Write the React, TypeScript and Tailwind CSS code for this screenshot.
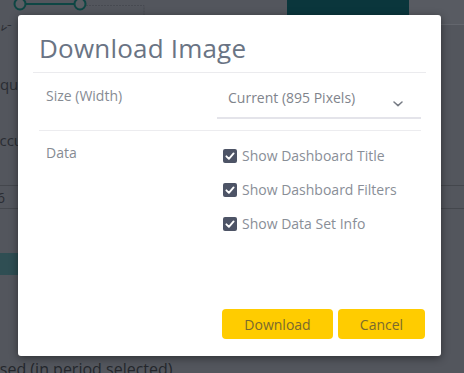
import { useState } from 'react';

const options = ['Show Dashboard Title', 'Show Dashboard Filters', 'Show Data Set Info'];

function Checkbox({ checked }: { checked: boolean }) {
    return (
        <span className="flex h-[14px] w-[14px] items-center justify-center rounded-[2px] bg-[#4d5466]">
            {checked && (
                <svg width="14" height="14" viewBox="0 0 14 14" fill="none">
                    <path d="M3.4 7.3 L5.9 9.8 L10.6 4.4" stroke="#ffffff" strokeWidth="1.9" strokeLinecap="round" strokeLinejoin="round" />
                </svg>
            )}
        </span>
    );
}

function Backdrop() {
    return (
        <div className="flex flex-col text-[#2a2d33]">
            {/* top strip */}
            <div className="flex h-[25px]">
                <svg width="287" height="25" viewBox="0 0 287 25">
                    <path d="M80 5.5 H144 V25" stroke="#474a51" strokeWidth="1" fill="none" strokeDasharray="2 1" />
                    <line x1="20" y1="4" x2="80" y2="4" stroke="#0e4644" strokeWidth="2" />
                    <circle cx="20" cy="4" r="5.5" fill="#5a5d63" stroke="#0e4644" strokeWidth="2" />
                    <circle cx="80" cy="4" r="5.5" fill="#5a5d63" stroke="#0e4644" strokeWidth="2" />
                </svg>
                <div className="h-[15px] w-[122px] bg-[#0a363c]" />
                <div className="h-[25px] flex-1 border-b border-[#63666d] bg-[#585b62]" />
            </div>

            {/* left labels, mostly hidden behind the dialog */}
            <div className="flex h-[160px] w-[18px] flex-col overflow-hidden text-[15px] leading-[20px]">
                <span className="ml-[-14px] mt-[2px] w-[40px] origin-left rotate-[-32deg] text-[13px] leading-[16px]">2020</span>
                <span className="ml-[-24px] mt-[31px] whitespace-nowrap">Unique</span>
                <span className="ml-[-10px] mt-[36px] whitespace-nowrap">Accuracy</span>
            </div>
            <div className="flex h-[24px] items-center border-y border-[#44474d] text-[14px]">
                <span className="ml-[-3px]">6</span>
            </div>
            <div className="h-[44px]" />
            <div className="h-[22px] w-[200px] bg-[#2f4e53]" />
            <div className="h-[82px]" />
            <div className="ml-[-10px] whitespace-nowrap text-[16px] leading-[24px] text-[#24272c]">used (in period selected)</div>
        </div>
    );
}

export default function App() {
    const [checked] = useState([true, true, true]);

    return (
        <div className="relative h-[373px] w-[464px] overflow-hidden bg-[#53565d] font-['Open_Sans',sans-serif]">
            <Backdrop />

            <div className="absolute inset-0 pl-[18px] pt-[15px]">
                <div className="flex h-[341px] w-[423px] flex-col rounded-[3px] bg-white shadow-[0_2px_8px_rgba(0,0,0,0.45)]">
                    <h2 className="ml-[21px] pt-[15px] text-[26px] leading-[36px] tracking-[0.2px] text-[#6a7484]">Download Image</h2>
                    <div className="mx-[15px] mt-[6px] h-px bg-[#ebebee]" />

                    {/* size row */}
                    <div className="flex pl-[28px] pr-[20px]">
                        <div className="w-[171px] pt-[13px] text-[14px] leading-[20px] text-[#868b93]">Size (Width)</div>
                        <div className="mt-[15px] flex w-[204px] items-start justify-between border-b-2 border-[#e4e4ea] pb-[9px] pl-[11px] pr-[18px]">
                            <span className="text-[14px] leading-[20px] text-[#7f848c]">Current (895 Pixels)</span>
                            <svg className="mt-[13px]" width="10" height="6" viewBox="0 0 10 6" fill="none">
                                <path d="M1 1 L5 4.6 L9 1" stroke="#767b84" strokeWidth="1.5" strokeLinecap="round" strokeLinejoin="round" />
                            </svg>
                        </div>
                    </div>
                    <div className="ml-[21px] mr-[20px] mt-[11px] h-px bg-[#ececef]" />

                    {/* data row */}
                    <div className="flex pl-[28px]">
                        <div className="w-[177px] pt-[12px] text-[14px] leading-[20px] text-[#868b93]">Data</div>
                        <div className="flex flex-col gap-[14px] pt-[15px]">
                            {options.map((label, i) => (
                                <label key={label} className="flex h-[20px] items-center gap-[5px]">
                                    <Checkbox checked={checked[i]} />
                                    <span className="text-[14px] leading-[20px] text-[#898e97]">{label}</span>
                                </label>
                            ))}
                        </div>
                    </div>

                    <div className="mt-auto flex justify-end gap-[5px] pb-[17px] pr-[16px]">
                        <button className="h-[30px] w-[111px] rounded-[4px] bg-[#ffcc00] text-[14px] text-[#7a6a2e]">Download</button>
                        <button className="h-[30px] w-[87px] rounded-[4px] bg-[#ffcc00] text-[14px] text-[#7a6a2e]">Cancel</button>
                    </div>
                </div>
            </div>
        </div>
    );
}
